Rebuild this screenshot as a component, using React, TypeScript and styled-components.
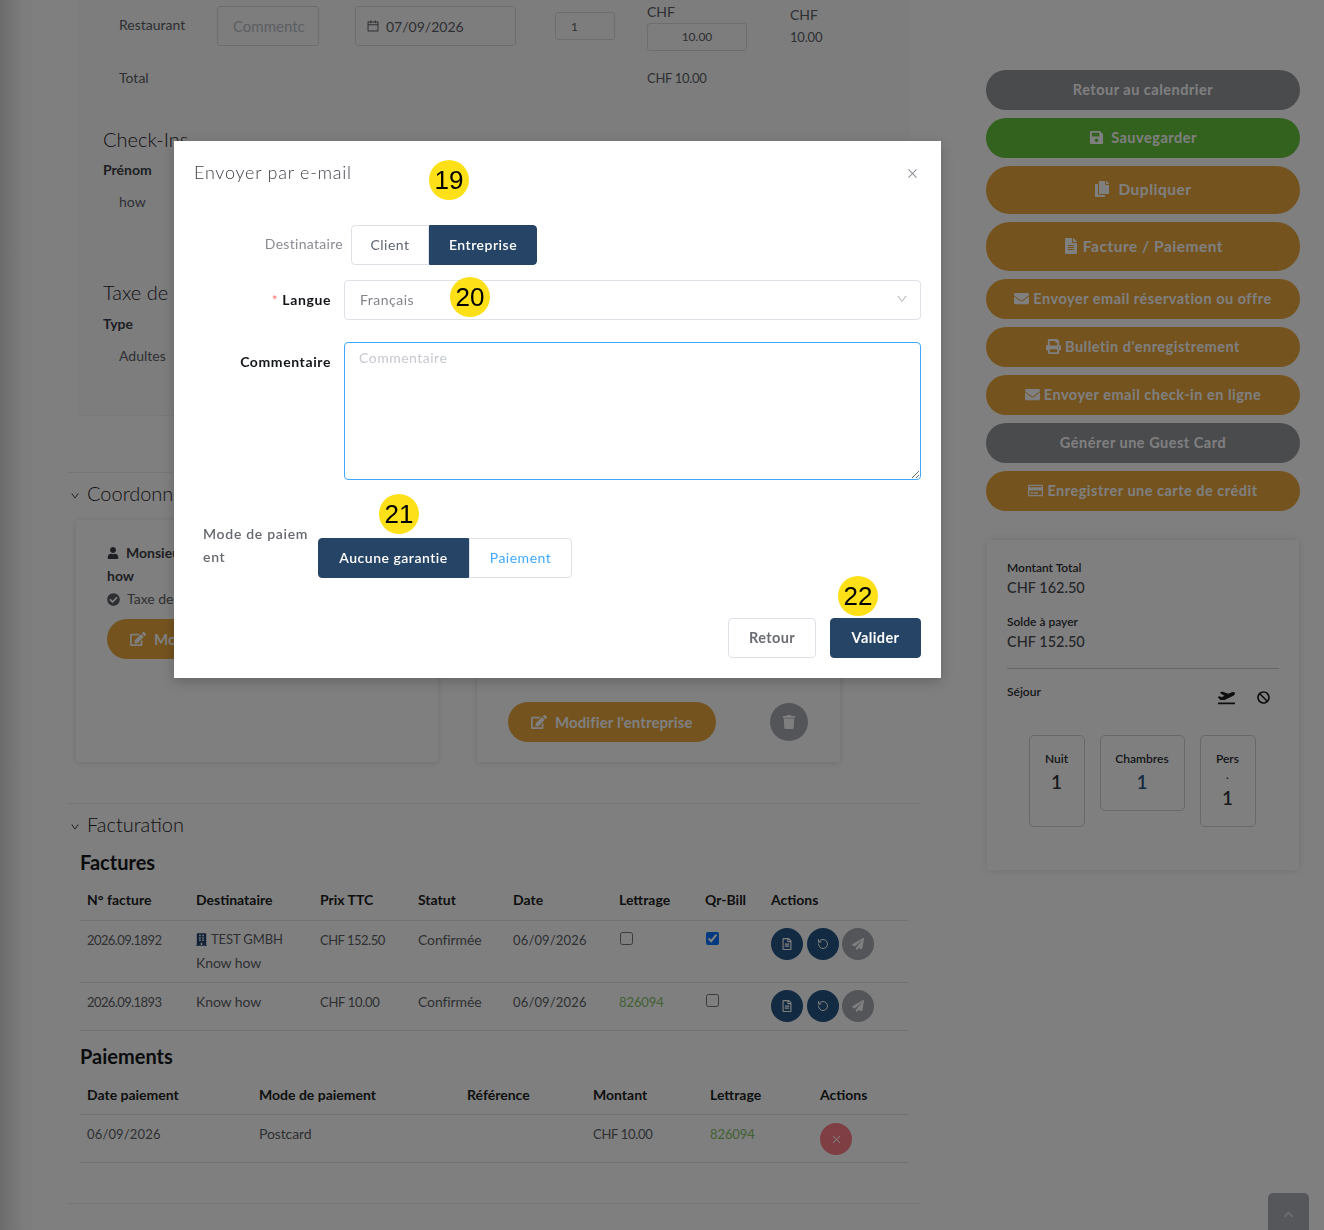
import React from "react";
import styled, { createGlobalStyle } from "styled-components";
import {
  FaBan,
  FaBuilding,
  FaCheckCircle,
  FaChevronUp,
  FaCopy,
  FaEdit,
  FaEnvelope,
  FaFileAlt,
  FaPaperPlane,
  FaPlaneDeparture,
  FaPrint,
  FaRegCreditCard,
  FaRegFileAlt,
  FaSave,
  FaTrash,
  FaUser,
} from "react-icons/fa";
import { AiOutlineCalendar, AiOutlineClose, AiOutlineDown } from "react-icons/ai";
import { RotateCcw } from "lucide-react";

const FONT = `"Lato", "Open Sans", sans-serif`;

const GlobalStyle = createGlobalStyle`
  html, body {
    margin: 0;
    padding: 0;
    background: #fff;
  }
  * {
    box-sizing: border-box;
  }
  body {
    font-family: ${FONT};
    font-size: 14px;
    color: #5c5f66;
  }
`;

const Page = styled.div`
  position: relative;
  width: 1324px;
  height: 1230px;
  overflow: hidden;
  display: grid;
  grid-template-columns: 852px 314px;
  column-gap: 66px;
  padding-left: 68px;
  align-items: start;
  background: linear-gradient(90deg, #d8d8d8 0, #fbfbfb 24px, #ffffff 40px);
`;

const LeftColumn = styled.main`
  display: flex;
  flex-direction: column;
`;

const Panel = styled.section`
  margin: 0 10px;
  height: 416px;
  padding: 4px 0 0 41px;
  background: #fafafb;
  border-bottom: 1px solid #f0f0f2;
`;

const ItemGrid = styled.div`
  display: grid;
  grid-template-columns: 98px 138px 200px 92px 143px 1fr;
  align-items: start;
`;

const PlainText = styled.div<{ $top?: number }>`
  line-height: 20px;
  margin-top: ${(p) => p.$top ?? 0}px;
`;

const Amount = styled.span<{ $spacing?: number }>`
  font-size: 13px;
  letter-spacing: ${(p) => p.$spacing ?? -0.3}px;
`;

const GhostInput = styled.div<{ $width: number; $height: number; $top?: number; $center?: boolean; $pad?: number }>`
  display: flex;
  align-items: center;
  gap: 6px;
  width: ${(p) => p.$width}px;
  height: ${(p) => p.$height}px;
  margin-top: ${(p) => p.$top ?? 0}px;
  padding: 0 ${(p) => p.$pad ?? 15}px;
  justify-content: ${(p) => (p.$center ? "center" : "flex-start")};
  border: 1px solid #d9dbe2;
  border-radius: 3px;
  font-size: ${(p) => (p.$height < 32 ? 12 : 14)}px;
  white-space: nowrap;
  overflow: hidden;
`;

const Muted = styled.span`
  color: #b9bcc4;
  font-size: 15px;
`;

const PriceStack = styled.div`
  display: flex;
  flex-direction: column;
  gap: 3px;
  line-height: 16px;
`;

const PriceValue = styled.div`
  margin-top: 4px;
  font-size: 13px;
  letter-spacing: -0.2px;
  line-height: 16px;
`;

const TotalRow = styled(ItemGrid)`
  margin-top: 4px;
`;

const Heading = styled.h3<{ $top: number }>`
  margin: ${(p) => p.$top}px 0 0 -16px;
  font-size: 20px;
  line-height: 28px;
  font-weight: 300;
  color: #1f2228;
`;

const FieldLabel = styled.div<{ $top: number }>`
  margin: ${(p) => p.$top}px 0 0 -16px;
  line-height: 20px;
  font-weight: 700;
  color: #3c3f45;
`;

const FieldValue = styled.div`
  margin-top: 12px;
  line-height: 20px;
`;

const Section = styled.section<{ $top: number }>`
  margin-top: ${(p) => p.$top}px;
  border-top: 1px solid #eceef1;
`;

const SectionTitle = styled.h2`
  display: flex;
  align-items: center;
  gap: 7px;
  margin: 6px 0 0;
  padding-left: 2px;
  font-size: 20px;
  line-height: 28px;
  font-weight: 300;
  color: #1f2228;
  svg {
    width: 10px;
    height: 10px;
    margin-top: 5px;
  }
`;

const CardRow = styled.div`
  display: flex;
  gap: 39px;
  margin: 13px 0 0 8px;
`;

const PersonCard = styled.article<{ $width: number }>`
  display: flex;
  flex-direction: column;
  width: ${(p) => p.$width}px;
  height: 242px;
  padding: 23px 31px 20px;
  background: #fff;
  box-shadow: 0 1px 6px rgba(0, 0, 0, 0.14);
  border-radius: 2px;
`;

const PersonLine = styled.div<{ $strong?: boolean }>`
  display: flex;
  align-items: center;
  gap: 7px;
  margin-bottom: 3px;
  line-height: 20px;
  font-weight: ${(p) => (p.$strong ? 700 : 400)};
  color: ${(p) => (p.$strong ? "#3c3f45" : "#5c5f66")};
  white-space: nowrap;
`;

const EditButton = styled.button<{ $top?: number }>`
  display: inline-flex;
  align-items: center;
  justify-content: flex-start;
  align-self: flex-start;
  gap: 8px;
  width: 208px;
  height: 40px;
  flex: none;
  margin-top: ${(p) => p.$top ?? 0}px;
  padding: 0 0 1px 23px;
  border: 0;
  border-radius: 20px;
  background: #e8a63e;
  color: #fff;
  font: 700 15px ${FONT};
  letter-spacing: 0.1px;
  white-space: nowrap;
`;

const CardActions = styled.div`
  display: flex;
  align-items: center;
  gap: 54px;
  margin-top: auto;
`;

const RoundIcon = styled.span<{ $bg: string; $size?: number }>`
  display: inline-flex;
  align-items: center;
  justify-content: center;
  flex: none;
  width: ${(p) => p.$size ?? 32}px;
  height: ${(p) => p.$size ?? 32}px;
  border-radius: 50%;
  background: ${(p) => p.$bg};
  color: #fff;
`;

const DeleteIcon = styled(RoundIcon)`
  margin: 1px 0 -1px;
`;

const SubHeading = styled.h3<{ $top: number }>`
  margin: ${(p) => p.$top}px 0 0 12px;
  font-size: 20px;
  line-height: 28px;
  font-weight: 700;
  color: #15171b;
`;

const DataTable = styled.table<{ $top?: number }>`
  width: 828px;
  margin: ${(p) => p.$top ?? 5}px 0 0 12px;
  border-collapse: collapse;
  table-layout: fixed;
  th {
    height: 39px;
    padding: 0 0 1px 7px;
    text-align: left;
    vertical-align: middle;
    font-size: 14px;
    font-weight: 700;
    color: #1c1e22;
    border-bottom: 1px solid #e3e5ea;
  }
  td {
    padding: 7px 0 8px 7px;
    vertical-align: top;
    line-height: 23px;
    letter-spacing: -0.1px;
    border-bottom: 1px solid #e3e5ea;
    white-space: nowrap;
  }
  input {
    display: block;
    width: 13px;
    height: 13px;
    margin: 4px 0 0 1px;
  }
`;

const CompanyLine = styled.span`
  display: inline-flex;
  align-items: center;
  gap: 4px;
  vertical-align: top;
  font-size: 13px;
  svg {
    color: #24466e;
    width: 11px;
    height: 13px;
  }
`;

const Lettrage = styled.span`
  color: #83c26a;
  font-size: 13px;
`;

const IconRow = styled.div`
  display: flex;
  gap: 3.5px;
`;

const SideColumn = styled.aside`
  display: flex;
  flex-direction: column;
  gap: 8px;
  padding-top: 70px;
`;

const ActionButton = styled.button<{ $bg: string; $height?: number; $gap?: number }>`
  display: flex;
  align-items: center;
  justify-content: center;
  gap: ${(p) => p.$gap ?? 4}px;
  width: 100%;
  height: ${(p) => p.$height ?? 40}px;
  padding: 0 0 2px;
  border: 0;
  border-radius: 24px;
  background: ${(p) => p.$bg};
  color: #fff;
  font: 700 ${(p) => (p.$height ? 15.5 : 14.5)}px ${FONT};
  letter-spacing: 0.5px;
  svg {
    width: ${(p) => (p.$height ? 16 : 15)}px;
    height: ${(p) => (p.$height ? 16 : 15)}px;
  }
`;

const SummaryCard = styled.div`
  margin: 21px 1px 0;
  height: 330px;
  padding: 20px 20px 0;
  background: #fff;
  box-shadow: 0 0 8px rgba(0, 0, 0, 0.12);
  border-radius: 2px;
`;

const SummaryLabel = styled.div<{ $top?: number }>`
  margin-top: ${(p) => p.$top ?? 0}px;
  font-size: 12px;
  line-height: 16px;
  font-weight: 600;
  color: #2c2e33;
`;

const SummaryValue = styled.div`
  margin-top: 2px;
  font-size: 14.5px;
  line-height: 19px;
  font-weight: 500;
  color: #4a4d53;
`;

const Rule = styled.hr`
  margin: 17px 0 0;
  border: 0;
  border-top: 1px solid #c9cbce;
`;

const StayHeader = styled.div`
  display: flex;
  justify-content: space-between;
  align-items: flex-start;
  margin-top: 15px;
`;

const StayIcons = styled.div`
  display: flex;
  gap: 22px;
  align-items: center;
  margin: 5px 9px 0 0;
  color: #1b1d21;
`;

const StayBoxes = styled.div`
  display: flex;
  justify-content: center;
  align-items: flex-start;
  gap: 15px;
  margin-top: 29px;
  padding-right: 2px;
`;

const StayBox = styled.div<{ $width: number; $height: number; $accent?: boolean }>`
  width: ${(p) => p.$width}px;
  height: ${(p) => p.$height}px;
  padding-top: 15px;
  border: 1px solid #cfd1d6;
  border-radius: 5px;
  text-align: center;
  font-size: 12px;
  line-height: 16px;
  font-weight: 600;
  color: #2c2e33;
  strong {
    display: block;
    margin-top: 3px;
    font-size: 19px;
    line-height: 24px;
    font-weight: 600;
    color: ${(p) => (p.$accent ? "#2c5684" : "#33363b")};
  }
`;

const ScrollTop = styled.div`
  position: absolute;
  left: 1268px;
  top: 1193px;
  width: 41px;
  height: 50px;
  display: flex;
  justify-content: center;
  padding-top: 16px;
  border-radius: 5px 5px 0 0;
  background: #abaeb5;
  color: #fff;
  svg {
    opacity: 0.55;
  }
`;

const Mask = styled.div`
  position: absolute;
  inset: 0;
  background: rgba(0, 0, 0, 0.5);
  backdrop-filter: blur(0.5px);
`;

const Modal = styled.div`
  position: absolute;
  left: 174px;
  top: 141px;
  width: 767px;
  height: 537px;
  padding: 20px;
  background: #fff;
  box-shadow: 0 4px 12px rgba(0, 0, 0, 0.2);
`;

const ModalHeader = styled.header`
  display: flex;
  align-items: center;
  justify-content: space-between;
  height: 24px;
  padding-right: 2px;
  color: #8d9096;
  h2 {
    margin: -2px 0 0;
    font-size: 18px;
    line-height: 24px;
    font-weight: 300;
    letter-spacing: 0.75px;
    color: #3f4248;
  }
`;

const FormRow = styled.div<{ $top: number }>`
  display: flex;
  margin-top: ${(p) => p.$top}px;
`;

const FormLabel = styled.label<{ $width: number; $gap: number; $strong?: boolean; $lineTop?: number }>`
  flex: none;
  width: ${(p) => p.$width}px;
  margin-right: ${(p) => p.$gap}px;
  padding-top: ${(p) => p.$lineTop ?? 10}px;
  text-align: right;
  line-height: 20px;
  letter-spacing: ${(p) => (p.$strong ? 0.6 : 0.3)}px;
  font-weight: ${(p) => (p.$strong ? 700 : 400)};
  color: ${(p) => (p.$strong ? "#14161a" : "#8a8c92")};
  em {
    margin-right: 4px;
    font-style: normal;
    font-weight: 400;
    color: #ff7875;
  }
`;

const PaymentLabel = styled.label`
  flex: none;
  align-self: flex-start;
  width: 105px;
  margin: -16px 10px 0 9px;
  line-height: 23px;
  letter-spacing: 0.7px;
  font-weight: 600;
  white-space: nowrap;
  color: #66696f;
`;

const Segmented = styled.div`
  display: flex;
`;

const Segment = styled.div<{ $width: number; $active?: boolean; $link?: boolean }>`
  display: flex;
  align-items: center;
  justify-content: center;
  width: ${(p) => p.$width}px;
  height: 40px;
  padding-bottom: 2px;
  border: 1px solid ${(p) => (p.$active ? "#264466" : "#dfe1e7")};
  background: ${(p) => (p.$active ? "#264466" : "#fff")};
  color: ${(p) => (p.$active ? "#fff" : p.$link ? "#40a9ff" : "#5e6673")};
  font-weight: ${(p) => (p.$active ? 600 : 400)};
  letter-spacing: 0.5px;
  &:first-child {
    border-radius: 4px 0 0 4px;
  }
  &:last-child {
    border-radius: 0 4px 4px 0;
  }
`;

const SelectBox = styled.div`
  flex: 1;
  display: flex;
  align-items: center;
  justify-content: space-between;
  height: 40px;
  padding: 0 12px 2px 15px;
  border: 1px solid #dfe1e7;
  border-radius: 4px;
  letter-spacing: 0.5px;
  color: #83858b;
  svg {
    color: #b4b6bb;
  }
`;

const CommentArea = styled.textarea`
  flex: 1;
  height: 138px;
  padding: 5px 14px;
  border: 1px solid #40a9ff;
  border-radius: 4px;
  outline: none;
  font: 400 14px/20px ${FONT};
  letter-spacing: 0.5px;
  &::placeholder {
    color: #c6c9d0;
  }
`;

const ModalFooter = styled.footer`
  display: flex;
  justify-content: flex-end;
  gap: 14px;
  margin-top: 40px;
`;

const FooterButton = styled.button<{ $width: number; $primary?: boolean }>`
  width: ${(p) => p.$width}px;
  height: 40px;
  padding: 0 0 2px;
  border: 1px solid ${(p) => (p.$primary ? "#264466" : "#dfe1e7")};
  border-radius: 4px;
  background: ${(p) => (p.$primary ? "#264466" : "#fff")};
  color: ${(p) => (p.$primary ? "#fff" : "#6a6d73")};
  font: 700 14.5px ${FONT};
  letter-spacing: 0.4px;
`;

// numbered callouts drawn over the screenshot
const Badge = styled.div<{ $x: number; $y: number }>`
  position: absolute;
  left: ${(p) => p.$x - 20}px;
  top: ${(p) => p.$y - 20}px;
  width: 40px;
  height: 40px;
  display: flex;
  align-items: center;
  justify-content: center;
  border-radius: 50%;
  background: #fde018;
  color: #000;
  font: 400 26px "Liberation Sans", Arial, sans-serif;
`;

const ORANGE = "#e8a63e";
const GREY = "#94969b";
const NAVY = "#245484";
const SEND_GREY = "#a9abb0";

const sideActions = [
  { label: "Retour au calendrier", bg: GREY },
  { label: "Sauvegarder", bg: "#66c43c", icon: <FaSave />, gap: 7 },
  { label: "Dupliquer", bg: ORANGE, height: 48, icon: <FaCopy />, gap: 8 },
  { label: "Facture / Paiement", bg: ORANGE, height: 49, icon: <FaFileAlt /> },
  { label: "Envoyer email réservation ou offre", bg: ORANGE, icon: <FaEnvelope /> },
  { label: "Bulletin d'enregistrement", bg: ORANGE, icon: <FaPrint /> },
  { label: "Envoyer email check-in en ligne", bg: ORANGE, icon: <FaEnvelope /> },
  { label: "Générer une Guest Card", bg: GREY },
  { label: "Enregistrer une carte de crédit", bg: ORANGE, icon: <FaRegCreditCard /> },
];

const InvoiceActions = () => (
  <IconRow>
    <RoundIcon $bg={NAVY}>
      <FaRegFileAlt size={12} />
    </RoundIcon>
    <RoundIcon $bg={NAVY}>
      <RotateCcw size={12} />
    </RoundIcon>
    <RoundIcon $bg={SEND_GREY}>
      <FaPaperPlane size={12} />
    </RoundIcon>
  </IconRow>
);

const App: React.FC = () => {
  return (
    <>
      <GlobalStyle />
      <Page>
        <LeftColumn>
          <Panel>
            <ItemGrid>
              <PlainText $top={11}>Restaurant</PlainText>
              <GhostInput $width={102} $height={40} $top={2}>
                <Muted>Commentc</Muted>
              </GhostInput>
              <GhostInput $width={161} $height={40} $top={2} $pad={10}>
                <AiOutlineCalendar size={14} />
                07/09/2026
              </GhostInput>
              <GhostInput $width={60} $height={28} $top={8}>
                1
              </GhostInput>
              <PriceStack>
                CHF
                <GhostInput $width={100} $height={28} $center>
                  10.00
                </GhostInput>
              </PriceStack>
              <div>
                <PriceStack>
                  <PlainText $top={1}>CHF</PlainText>
                </PriceStack>
                <PriceValue>10.00</PriceValue>
              </div>
            </ItemGrid>
            <TotalRow>
              <PlainText $top={13}>Total</PlainText>
              <span />
              <span />
              <span />
              <PlainText $top={13}>
                <Amount>CHF 10.00</Amount>
              </PlainText>
            </TotalRow>
            <Heading $top={37}>Check-Ins</Heading>
            <FieldLabel $top={7}>Prénom</FieldLabel>
            <FieldValue>how</FieldValue>
            <Heading $top={66}>Taxe de séjour</Heading>
            <FieldLabel $top={8}>Type</FieldLabel>
            <FieldValue>Adultes</FieldValue>
          </Panel>

          <Section $top={56}>
            <SectionTitle>
              <AiOutlineDown />
              Coordonnées
            </SectionTitle>
            <CardRow>
              <PersonCard $width={362}>
                <PersonLine $strong>
                  <FaUser size={12} />
                  Monsieur
                </PersonLine>
                <PersonLine $strong>how</PersonLine>
                <PersonLine>
                  <FaCheckCircle size={13} />
                  Taxe de séjour
                </PersonLine>
                <EditButton $top={7}>
                  <FaEdit size={16} />
                  Modifier le client
                </EditButton>
              </PersonCard>
              <PersonCard $width={363}>
                <CardActions>
                  <EditButton>
                    <FaEdit size={16} />
                    Modifier l'entreprise
                  </EditButton>
                  <RoundIcon $bg="#a9abb0" $size={38}>
                    <FaTrash size={14} />
                  </RoundIcon>
                </CardActions>
              </PersonCard>
            </CardRow>
          </Section>

          <Section $top={41}>
            <SectionTitle>
              <AiOutlineDown />
              Facturation
            </SectionTitle>
            <SubHeading $top={10}>Factures</SubHeading>
            <DataTable>
              <colgroup>
                <col width={109} />
                <col width={124} />
                <col width={98} />
                <col width={95} />
                <col width={106} />
                <col width={86} />
                <col width={66} />
                <col width={144} />
              </colgroup>
              <thead>
                <tr>
                  <th>N° facture</th>
                  <th>Destinataire</th>
                  <th>Prix TTC</th>
                  <th>Statut</th>
                  <th>Date</th>
                  <th>Lettrage</th>
                  <th>Qr-Bill</th>
                  <th>Actions</th>
                </tr>
              </thead>
              <tbody>
                <tr>
                  <td>
                    <Amount $spacing={-0.6}>2026.09.1892</Amount>
                  </td>
                  <td>
                    <CompanyLine>
                      <FaBuilding />
                      TEST GMBH
                    </CompanyLine>
                    <br />
                    Know how
                  </td>
                  <td>
                    <Amount $spacing={-0.5}>CHF 152.50</Amount>
                  </td>
                  <td>Confirmée</td>
                  <td>
                    <Amount $spacing={0.15}>06/09/2026</Amount>
                  </td>
                  <td>
                    <input type="checkbox" readOnly />
                  </td>
                  <td>
                    <input type="checkbox" checked readOnly />
                  </td>
                  <td>
                    <InvoiceActions />
                  </td>
                </tr>
                <tr>
                  <td>
                    <Amount $spacing={-0.6}>2026.09.1893</Amount>
                  </td>
                  <td>Know how</td>
                  <td>
                    <Amount>CHF 10.00</Amount>
                  </td>
                  <td>Confirmée</td>
                  <td>
                    <Amount $spacing={0.15}>06/09/2026</Amount>
                  </td>
                  <td>
                    <Lettrage>826094</Lettrage>
                  </td>
                  <td>
                    <input type="checkbox" readOnly />
                  </td>
                  <td>
                    <InvoiceActions />
                  </td>
                </tr>
              </tbody>
            </DataTable>
            <SubHeading $top={11}>Paiements</SubHeading>
            <DataTable $top={6}>
              <colgroup>
                <col width={172} />
                <col width={208} />
                <col width={126} />
                <col width={117} />
                <col width={110} />
                <col width={95} />
              </colgroup>
              <thead>
                <tr>
                  <th>Date paiement</th>
                  <th>Mode de paiement</th>
                  <th>Référence</th>
                  <th>Montant</th>
                  <th>Lettrage</th>
                  <th>Actions</th>
                </tr>
              </thead>
              <tbody>
                <tr>
                  <td>
                    <Amount $spacing={0.15}>06/09/2026</Amount>
                  </td>
                  <td>Postcard</td>
                  <td />
                  <td>
                    <Amount>CHF 10.00</Amount>
                  </td>
                  <td>
                    <Lettrage>826094</Lettrage>
                  </td>
                  <td>
                    <DeleteIcon $bg="#ff7d88">
                      <AiOutlineClose size={11} />
                    </DeleteIcon>
                  </td>
                </tr>
              </tbody>
            </DataTable>
          </Section>
          <Section $top={40} />
        </LeftColumn>

        <SideColumn>
          {sideActions.map((action) => (
            <ActionButton key={action.label} $bg={action.bg} $height={action.height} $gap={action.gap}>
              {action.icon}
              {action.label}
            </ActionButton>
          ))}
          <SummaryCard>
            <SummaryLabel>Montant Total</SummaryLabel>
            <SummaryValue>CHF 162.50</SummaryValue>
            <SummaryLabel $top={17}>Solde à payer</SummaryLabel>
            <SummaryValue>CHF 152.50</SummaryValue>
            <Rule />
            <StayHeader>
              <SummaryLabel>Séjour</SummaryLabel>
              <StayIcons>
                <FaPlaneDeparture size={17} />
                <FaBan size={13} />
              </StayIcons>
            </StayHeader>
            <StayBoxes>
              <StayBox $width={56} $height={92}>
                Nuit
                <strong>1</strong>
              </StayBox>
              <StayBox $width={85} $height={76} $accent>
                Chambres
                <strong>1</strong>
              </StayBox>
              <StayBox $width={56} $height={92}>
                Pers
                <br />.
                <strong>1</strong>
              </StayBox>
            </StayBoxes>
          </SummaryCard>
        </SideColumn>

        <ScrollTop>
          <FaChevronUp size={11} />
        </ScrollTop>
        <Mask />

        <Modal>
          <ModalHeader>
            <h2>Envoyer par e-mail</h2>
            <AiOutlineClose size={13} />
          </ModalHeader>
          <FormRow $top={40}>
            <FormLabel $width={149} $gap={8} $lineTop={9}>
              Destinataire
            </FormLabel>
            <Segmented>
              <Segment $width={78}>Client</Segment>
              <Segment $width={108} $active>
                Entreprise
              </Segment>
            </Segmented>
          </FormRow>
          <FormRow $top={15}>
            <FormLabel $width={137} $gap={13} $strong>
              <em>*</em>Langue
            </FormLabel>
            <SelectBox>
              Français
              <AiOutlineDown size={12} />
            </SelectBox>
          </FormRow>
          <FormRow $top={22}>
            <FormLabel $width={137} $gap={13} $strong>
              Commentaire
            </FormLabel>
            <CommentArea placeholder="Commentaire" />
          </FormRow>
          <FormRow $top={58}>
            <PaymentLabel>
              Mode de paiem
              <br />
              ent
            </PaymentLabel>
            <Segmented>
              <Segment $width={151} $active>
                Aucune garantie
              </Segment>
              <Segment $width={103} $link>
                Paiement
              </Segment>
            </Segmented>
          </FormRow>
          <ModalFooter>
            <FooterButton $width={88}>Retour</FooterButton>
            <FooterButton $width={91} $primary>
              Valider
            </FooterButton>
          </ModalFooter>
        </Modal>

        <Badge $x={449} $y={180}>19</Badge>
        <Badge $x={470} $y={297}>20</Badge>
        <Badge $x={399} $y={514}>21</Badge>
        <Badge $x={858} $y={596}>22</Badge>
      </Page>
    </>
  );
};

export default App;
